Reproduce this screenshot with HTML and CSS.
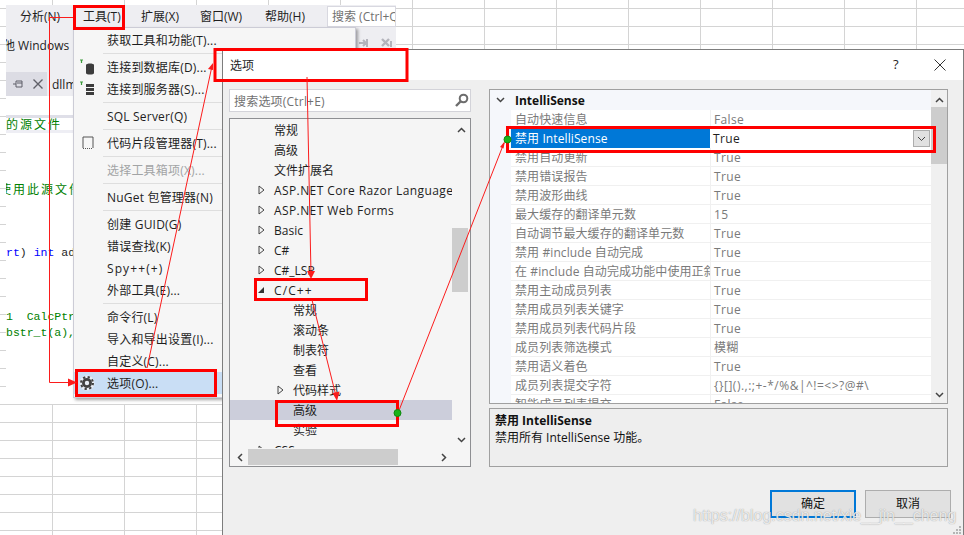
FILE: index.html
```html
<!DOCTYPE html>
<html lang="zh-CN">
<head>
<meta charset="utf-8">
<title>选项</title>
<link rel="stylesheet" href="styles.css">
</head>
<body>
<div class="desktop">
  <section class="vs">
    <div class="menubar">
      <span class="mb mb-a">分析(N)</span>
      <span class="mb mb-b">工具(T)</span>
      <span class="mb mb-c">扩展(X)</span>
      <span class="mb mb-d">窗口(W)</span>
      <span class="mb mb-e">帮助(H)</span>
      <div class="vs-search">搜索 (Ctrl+Q)</div>
    </div>
    <div class="toolrow">
      <span class="other">其他 Windows</span>
      <svg class="toolicons" width="36" height="10" viewBox="0 0 36 10"><path d="M1 5h6M5 2l3 3-3 3M9 1v8" stroke="#b4b4bc" stroke-width="2" fill="none"/><path d="M24 1l7 7M31 1l-7 7" stroke="#b4b4bc" stroke-width="2.4"/><path d="M33 3v6" stroke="#b4b4bc" stroke-width="2"/></svg>
    </div>
    <div class="tabrow">
      <div class="tab-dark">
        <svg width="12" height="12" viewBox="0 0 12 12"><path d="M1 6h3M4 3v6h6V3zM10 5H5" stroke="#5f5f68" fill="none"/></svg>
        <svg width="12" height="12" viewBox="0 0 12 12"><path d="M1.5 1.5l9 9M10.5 1.5l-9 9" stroke="#5f5f68" stroke-width="1.4"/></svg>
      </div>
      <span class="tabname">dllmain.cpp</span>
    </div>
    <div class="code">
      <div class="band"><span class="cn-green">的源文件</span></div>
      <div class="line second"><span class="cn-green clip">使用此源文件</span></div>
      <div class="line spaced"><span class="kw">rt</span>) <span class="kw">int</span> add</div>
      <div class="line spaced green">1  CalcPtr</div>
      <div class="line green">bstr_t(a),</div>
    </div>
  </section>

  <nav class="menu">
    <div class="item"><span class="ico"></span>获取工具和功能(T)...</div>
    <div class="sep"></div>
    <div class="item"><span class="ico"><svg width="24" height="16" viewBox="0 0 24 16"><path d="M2 1h3M3.500 1v3" stroke="#3a9a3a" stroke-width="1.2" fill="none"/><path d="M8 6c0-2 8-2 8 0v8c0 2-8 2-8 0z" fill="#3d3d3d"/></svg></span>连接到数据库(D)...</div>
    <div class="item"><span class="ico"><svg width="24" height="16" viewBox="0 0 24 16"><path d="M2 1h3M3.500 1v3" stroke="#3a9a3a" stroke-width="1.2" fill="none"/><path d="M8 3h8v3H8zM8 7h8v3H8zM8 11h8v3H8z" fill="#3d3d3d"/></svg></span>连接到服务器(S)...</div>
    <div class="sep"></div>
    <div class="item"><span class="ico"></span>SQL Server(Q)</div>
    <div class="sep"></div>
    <div class="item"><span class="ico"><svg width="24" height="16" viewBox="0 0 24 16"><path d="M5 13V2h10v11" stroke="#555" fill="none"/><path d="M5 13.500h10" stroke="#555" stroke-dasharray="1 1"/></svg></span>代码片段管理器(T)...</div>
    <div class="sep"></div>
    <div class="item off"><span class="ico"></span>选择工具箱项(X)...</div>
    <div class="sep"></div>
    <div class="item"><span class="ico"></span>NuGet 包管理器(N)</div>
    <div class="sep"></div>
    <div class="item"><span class="ico"></span>创建 GUID(G)</div>
    <div class="item"><span class="ico"></span>错误查找(K)</div>
    <div class="item"><span class="ico"></span><span class="plus">Spy++(+)</span></div>
    <div class="item"><span class="ico"></span>外部工具(E)...</div>
    <div class="sep"></div>
    <div class="item"><span class="ico"></span>命令行(L)</div>
    <div class="item"><span class="ico"></span>导入和导出设置(I)...</div>
    <div class="item"><span class="ico"></span>自定义(C)...</div>
    <div class="item sel"><span class="ico"><svg width="24" height="16" viewBox="0 0 24 16"><circle cx="9" cy="8" r="7.500" fill="#e9eef6"/><circle cx="9" cy="8" r="3.600" fill="none" stroke="#424242" stroke-width="2.800"/><circle cx="9" cy="8" r="6" fill="none" stroke="#424242" stroke-width="2" stroke-dasharray="2.300 2.400"/></svg></span>选项(O)...</div>
  </nav>

  <section class="dialog">
    <header class="dlg-title">
      <span class="dlg-name">选项</span>
      <span class="dlg-help">?</span>
      <svg class="dlg-close" width="12" height="12" viewBox="0 0 12 12"><path d="M.5.500l11 11M11.500.500l-11 11" stroke="#333" fill="none"/></svg>
    </header>
    <div class="dlg-body">
      <div class="col-left">
        <div class="search">
          <span>搜索选项(Ctrl+E)</span>
          <svg width="15" height="15" viewBox="0 0 15 15"><circle cx="9.500" cy="5.500" r="3.800" fill="none" stroke="#6d6d6d" stroke-width="2"/><path d="M7 8l-5 5" stroke="#6d6d6d" stroke-width="2.400"/></svg>
        </div>
        <div class="tree">
          <div class="tree-top">
            <div class="tree-view">
              <div class="row"><i class="tw"></i>常规</div>
              <div class="row"><i class="tw"></i>高级</div>
              <div class="row"><i class="tw"></i>文件扩展名</div>
              <div class="row wide"><i class="tw"><svg width="7" height="10" viewBox="0 0 7 10"><path d="M1 1l5 4-5 4z" fill="none" stroke="#444"/></svg></i>ASP.NET Core Razor Languages</div>
              <div class="row wide"><i class="tw"><svg width="7" height="10" viewBox="0 0 7 10"><path d="M1 1l5 4-5 4z" fill="none" stroke="#444"/></svg></i>ASP.NET Web Forms</div>
              <div class="row"><i class="tw"><svg width="7" height="10" viewBox="0 0 7 10"><path d="M1 1l5 4-5 4z" fill="none" stroke="#444"/></svg></i>Basic</div>
              <div class="row"><i class="tw"><svg width="7" height="10" viewBox="0 0 7 10"><path d="M1 1l5 4-5 4z" fill="none" stroke="#444"/></svg></i>C#</div>
              <div class="row"><i class="tw"><svg width="7" height="10" viewBox="0 0 7 10"><path d="M1 1l5 4-5 4z" fill="none" stroke="#444"/></svg></i>C#_LSP</div>
              <div class="row plus"><i class="tw"><svg width="7" height="10" viewBox="0 0 7 10"><path d="M0 8l6-6v6z" fill="#333"/></svg></i>C/C++</div>
              <div class="row child"><i class="tw"></i>常规</div>
              <div class="row child"><i class="tw"></i>滚动条</div>
              <div class="row child"><i class="tw"></i>制表符</div>
              <div class="row child"><i class="tw"></i>查看</div>
              <div class="row child"><i class="tw"><svg width="7" height="10" viewBox="0 0 7 10"><path d="M1 1l5 4-5 4z" fill="none" stroke="#444"/></svg></i>代码样式</div>
              <div class="row child current"><i class="tw"></i>高级</div>
              <div class="row child"><i class="tw"></i>实验</div>
              <div class="row"><i class="tw"><svg width="7" height="10" viewBox="0 0 7 10"><path d="M1 1l5 4-5 4z" fill="none" stroke="#444"/></svg></i>CSS</div>
            </div>
            <div class="vbar tree-vbar">
              <svg class="chev" width="9" height="6" viewBox="0 0 9 6"><path d="M1 5l3.500-3.500L8 5" fill="none" stroke="#444" stroke-width="1.500"/></svg>
              <div class="track tree-track"><div class="thumb tree-thumb"></div></div>
              <svg class="chev" width="9" height="6" viewBox="0 0 9 6"><path d="M1 1l3.500 3.500L8 1" fill="none" stroke="#444" stroke-width="1.500"/></svg>
            </div>
          </div>
          <div class="hbar">
            <svg width="6" height="9" viewBox="0 0 6 9"><path d="M5 1L1.500 4.500 5 8" fill="none" stroke="#444" stroke-width="1.500"/></svg>
            <div class="hthumb"></div>
            <svg class="hright" width="6" height="9" viewBox="0 0 6 9"><path d="M1 1l3.500 3.500L1 8" fill="none" stroke="#444" stroke-width="1.500"/></svg>
          </div>
        </div>
      </div>
      <div class="col-right">
        <div class="props">
          <div class="prop-main">
            <div class="prop-head">
              <svg width="9" height="6" viewBox="0 0 9 6"><path d="M1 1l3.500 3.500L8 1" fill="none" stroke="#444" stroke-width="1.500"/></svg>
              <b>IntelliSense</b>
            </div>
            <div class="prop-list">
              <div class="prop"><span>自动快速信息</span><span>False</span></div>
              <div class="prop active"><span>禁用 IntelliSense</span><span>True</span><em class="combo"><svg width="9" height="6" viewBox="0 0 9 6"><path d="M1 1l3.500 3.500L8 1" fill="none" stroke="#444"/></svg></em></div>
              <div class="prop"><span>禁用自动更新</span><span>True</span></div>
              <div class="prop"><span>禁用错误报告</span><span>True</span></div>
              <div class="prop"><span>禁用波形曲线</span><span>True</span></div>
              <div class="prop"><span>最大缓存的翻译单元数</span><span>15</span></div>
              <div class="prop"><span>自动调节最大缓存的翻译单元数</span><span>True</span></div>
              <div class="prop"><span>禁用 #include 自动完成</span><span>True</span></div>
              <div class="prop"><span>在 #include 自动完成功能中使用正斜杠</span><span>True</span></div>
              <div class="prop"><span>禁用主动成员列表</span><span>True</span></div>
              <div class="prop"><span>禁用成员列表关键字</span><span>True</span></div>
              <div class="prop"><span>禁用成员列表代码片段</span><span>True</span></div>
              <div class="prop"><span>成员列表筛选模式</span><span>模糊</span></div>
              <div class="prop"><span>禁用语义着色</span><span>True</span></div>
              <div class="prop"><span>成员列表提交字符</span><span class="chars">{}[]().,:;+-*/%&amp;|^!=&lt;&gt;?@#\</span></div>
              <div class="prop"><span>智能成员列表提交</span><span>False</span></div>
            </div>
          </div>
          <div class="vbar prop-vbar">
            <svg class="chev" width="9" height="6" viewBox="0 0 9 6"><path d="M1 5l3.500-3.500L8 5" fill="none" stroke="#444" stroke-width="1.500"/></svg>
            <div class="track prop-track"><div class="thumb prop-thumb"></div></div>
            <svg class="chev" width="9" height="6" viewBox="0 0 9 6"><path d="M1 1l3.500 3.500L8 1" fill="none" stroke="#444" stroke-width="1.500"/></svg>
          </div>
        </div>
        <div class="desc">
          <b>禁用 IntelliSense</b>
          <p>禁用所有 IntelliSense 功能。</p>
        </div>
      </div>
    </div>
    <footer class="dlg-foot">
      <button class="btn primary">确定</button>
      <button class="btn">取消</button>
    </footer>
    <svg class="grip" width="10" height="10" viewBox="0 0 10 10"><path d="M7 1h2v2H7zM4 4h2v2H4zM7 4h2v2H7zM1 7h2v2H1zM4 7h2v2H4zM7 7h2v2H7z" fill="#b5b5b5"/></svg>
  </section>

  <div class="watermark">https://blog.csdn.net/xie__jin__cheng</div>

  <svg class="notes" width="964" height="535" viewBox="0 0 964 535">
    <g fill="none" stroke="#fe0000" stroke-width="3">
      <rect x="74.500" y="6.500" width="49" height="22"/>
      <rect x="76.500" y="370.500" width="139" height="25"/>
      <rect x="215" y="49.500" width="192" height="31"/>
      <rect x="255.500" y="279.500" width="111" height="20"/>
      <rect x="276.500" y="401.500" width="121" height="24"/>
      <rect x="507.500" y="127.500" width="427" height="24"/>
    </g>
    <g fill="none" stroke="#fb1c1c" stroke-width="1">
      <path d="M73 17.500H49.500V382.500H70"/>
      <path d="M147 368L212 66"/>
      <path d="M307 77L311 274"/>
      <path d="M312 300L336 396"/>
      <path d="M398 413L504 143"/>
    </g>
    <g fill="#fb1c1c">
      <path d="M77 382.500l-9-4v8z"/>
      <path d="M213 63l-5 6 5 1z"/>
      <path d="M311 279l-4-8h8z"/>
      <path d="M337 401l-4.500-8 7-1.500z"/>
      <path d="M505 141l-5 6 3.500 1.500z"/>
    </g>
    <circle cx="397.500" cy="413" r="3.500" fill="#1ab31a" stroke="#0f8a0f"/>
    <circle cx="507.500" cy="139.500" r="3.500" fill="#1ab31a" stroke="#0f8a0f"/>
  </svg>
</div>
</body>
</html>
```

FILE: styles.css
```css
* { box-sizing: border-box; }
html, body { margin: 0; padding: 0; }
body { font-family: "Open Sans", "Noto Sans CJK SC", sans-serif; font-size: 12px; color: #1e1e1e; }

.desktop {
  position: relative;
  width: 964px;
  height: 535px;
  overflow: hidden;
  background-color: #fff;
  background-image:
    linear-gradient(90deg, #d4d4d4 1px, transparent 1px),
    linear-gradient(#d4d4d4 1px, transparent 1px);
  background-size: 72px 18px;
  background-position: 52px 8px;
}

/* IDE window behind */
.vs {
  position: absolute;
  left: 6px;
  top: 5px;
  width: 390px;
  height: 399px;
  display: flex;
  flex-direction: column;
  background: #eeeef2;
  overflow: hidden;
}
.menubar { position: relative; display: flex; height: 22px; align-items: center; flex: none; }
.mb { flex: none; }
.mb-a { margin-left: 14px; width: 63px; }
.mb-b { width: 58px; }
.mb-c { width: 59px; }
.mb-d { width: 65px; }
.mb-e { width: 62px; }
.vs-search {
  width: 69px;
  height: 21px;
  line-height: 20px;
  padding-left: 4px;
  background: #fff;
  border: 1px solid #d8d8e0;
  color: #717171;
  white-space: nowrap;
  overflow: hidden;
}
.toolrow { position: relative; height: 45px; flex: none; }
.other { display: block; margin: 9px 0 0 -15px; line-height: 20px; white-space: nowrap; }
.toolicons { position: absolute; right: 2px; top: 11px; }
.tabrow { display: flex; height: 24px; align-items: center; flex: none; }
.tab-dark { display: flex; align-items: center; gap: 8px; width: 41px; height: 24px; padding-left: 6px; background: #dcdce4; }
.tabname { padding-left: 5px; white-space: nowrap; }
.code { flex: 1; background: #fff; font-family: "Liberation Mono", "Noto Sans CJK SC", monospace; font-size: 11.500px; overflow: hidden; }
.band { margin-top: 19px; height: 18px; border-top: 3px solid #dfdfe8; border-bottom: 3px solid #eeeef4; line-height: 12px; }
.cn-green { color: #008000; font-family: "Noto Sans CJK SC", sans-serif; font-size: 12px; letter-spacing: 2px; }
.line { height: 16px; line-height: 16px; white-space: pre; }
.second { margin-top: 48px; }
.spaced { margin-top: 48px; }
.clip { display: inline-block; margin-left: -7px; }
.kw { color: #0000ff; }
.green { color: #008000; }

/* Dropdown */
.menu {
  position: absolute;
  left: 73px;
  top: 27px;
  width: 283px;
  height: 371px;
  padding-top: 1px;
  background: #f6f6f6;
  border: 1px solid #ccccd6;
  box-shadow: 2px 2px 3px rgba(0, 0, 0, .35);
  letter-spacing: .2px;
}
.item { display: flex; align-items: center; height: 22px; white-space: nowrap; }
.ico { display: flex; align-items: center; flex: none; width: 33px; padding-left: 4px; }
.sep { height: 5px; margin-left: 29px; padding-top: 2px; background: linear-gradient(#f6f6f6 2px, #dedede 2px, #dedede 3px, #f6f6f6 3px); }
.off { color: #a2a4a5; }
.sel { background: #c9def5; }
.plus { letter-spacing: 1.100px; }

/* Options dialog */
.dialog {
  position: absolute;
  left: 222px;
  top: 49px;
  width: 742px;
  height: 486px;
  display: flex;
  flex-direction: column;
  background: #efefef;
  border: 1px solid #7d7d7d;
  border-bottom: 0;
}
.dlg-title { position: relative; display: flex; align-items: center; flex: none; height: 30px; padding-left: 7px; background: #fff; }
.dlg-name { font-size: 12px; }
.dlg-help { position: absolute; left: 670px; top: 5px; font-size: 13px; }
.dlg-close { position: absolute; left: 711px; top: 9px; }
.dlg-body { display: flex; flex: none; gap: 18px; padding: 9px 0 0 6px; }
.col-left { width: 242px; display: flex; flex-direction: column; gap: 6px; }
.col-right { width: 459px; display: flex; flex-direction: column; gap: 4px; }

.search {
  display: flex;
  align-items: center;
  justify-content: space-between;
  height: 23px;
  padding: 0 1px 0 4px;
  background: #fff;
  border: 1px solid #d3d3d9;
  color: #717171;
  letter-spacing: .2px;
}
.tree { display: flex; flex-direction: column; height: 349px; background: #f5f5f5; border: 1px solid #8e8f92; }
.tree-top { display: flex; height: 329px; flex: none; }
.tree-view { flex: 1; min-width: 0; overflow: hidden; padding-top: 1px; }
.row { display: flex; align-items: center; height: 20px; padding-left: 28px; white-space: nowrap; }
.child { padding-left: 47px; }
.current { background: #cccedb; }
.wide { letter-spacing: .4px; }
.tw { display: flex; align-items: center; flex: none; width: 16px; }
.vbar { display: flex; flex-direction: column; align-items: center; flex: none; }
.chev { flex: none; }
.tree-vbar { width: 18px; padding-top: 8px; padding-bottom: 5px; }
.track { flex: 1; width: 100%; }
.tree-track { padding-top: 95px; }
.thumb { background: #cdcdcd; margin: 0 2px 0 0; }
.tree-thumb { height: 64px; }
.hbar { position: relative; display: flex; align-items: center; height: 18px; width: 222px; padding-left: 7px; }
.hthumb { width: 150px; height: 16px; margin-left: 5px; background: #cdcdcd; }
.hright { margin-left: 43px; }

.props { display: flex; height: 315px; background: #fff; border: 1px solid #a0a0a0; }
.prop-main { flex: 1; min-width: 0; overflow: hidden; background: linear-gradient(90deg, #f5f7fb 21px, transparent 21px); }
.prop-head { display: flex; align-items: center; height: 20px; padding-left: 6px; background: #f5f7fb; }
.prop-head b { margin-left: 10px; font-weight: 700; color: #111; }
.prop-list { margin-left: 21px; }
.prop { position: relative; display: grid; grid-template-columns: 199px 1fr; height: 19px; border-bottom: 1px solid #f0f0f0; color: #7a7a7a; line-height: 20px; white-space: nowrap; overflow: hidden; }
.prop span { overflow: hidden; padding-left: 4px; letter-spacing: .1px; }
.prop span + span { border-left: 1px solid #f0f0f0; padding-left: 3px; letter-spacing: .35px; }
.prop .chars { letter-spacing: .5px; }
.active { border-bottom: 0; }
.active span:first-child { background: #0078d7; color: #fff; }
.active span + span { color: #1e1e1e; border-left: 0; }
.combo { position: absolute; right: 1px; top: 1px; display: flex; align-items: center; justify-content: center; width: 17px; height: 17px; background: #e1e1e1; border: 1px solid #adadad; }
.prop-vbar { width: 16px; padding-top: 7px; padding-bottom: 5px; background: #f0f0f0; }
.prop-track { padding-top: 4px; }
.prop-thumb { height: 57px; margin: 0; }

.desc { height: 59px; padding: 3px 5px; background: #eeeeee; border: 1px solid #a0a0a0; line-height: 18px; color: #111; }
.desc b { display: block; font-weight: 700; }
.desc p { margin: -1px 0 0; }

.dlg-foot { display: flex; justify-content: flex-end; gap: 9px; margin-top: 23px; padding-right: 12px; }
.btn { width: 86px; height: 28px; padding: 0 0 2px; background: #e1e1e1; border: 1px solid #adadad; font: inherit; color: #111; }
.primary { border: 2px solid #0078d7; }
.grip { position: absolute; right: 1px; bottom: 0; }

.watermark {
  position: absolute;
  left: 693px;
  top: 505px;
  font-family: "Liberation Sans", sans-serif;
  font-size: 16px;
  line-height: 22px;
  white-space: nowrap;
  color: rgba(255, 255, 255, .8);
  text-shadow: 0 0 1px rgba(110, 110, 110, .8);
}
.notes { position: absolute; left: 0; top: 0; pointer-events: none; }
```
